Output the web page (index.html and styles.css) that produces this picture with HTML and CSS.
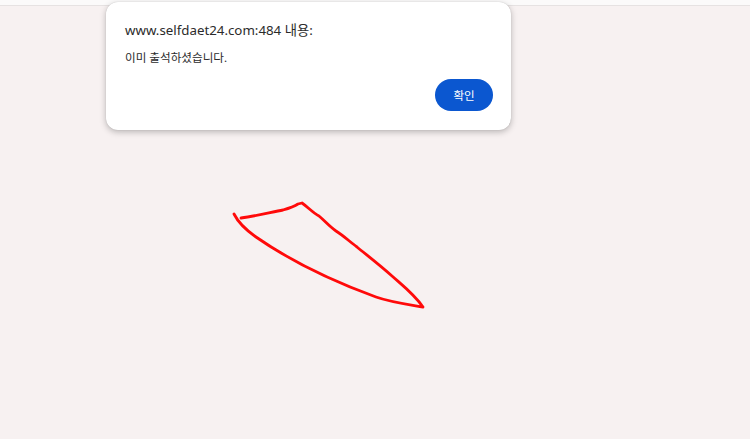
FILE: index.html
```html
<!DOCTYPE html>
<html lang="ko">
    <head>
        <meta charset="utf-8" />
        <title>출석체크</title>
        <link rel="stylesheet" href="styles.css">
    </head>
    <body>
        <div class="topBar"></div>
        <div class="page">
            <svg class="scribble" width="750" height="439" viewBox="0 0 750 439">
                <path d="M241 218 C 256 216, 272 212, 283 210 C 290 208, 295 206, 298 204 L 302 203 C 309 208, 313 213, 319 216 C 325 221, 329 226, 336 231 C 344 236, 350 242, 357 247 C 368 256, 381 266, 392 276 C 402 285, 414 294, 423 307 C 405 304, 390 302, 376 297 C 332 281, 292 262, 256 237 C 246 230, 238 222, 234 214" fill="none" stroke="#ff0a0a" stroke-width="2.8" stroke-linecap="round" stroke-linejoin="round"/>
            </svg>
        </div>
        <div class="dialog">
            <div class="dialogTitle">www.selfdaet24.com:484 내용:</div>
            <div class="dialogMsg">이미 출석하셨습니다.</div>
            <div class="dialogButtons">
                <button class="okButton">확인</button>
            </div>
        </div>
    </body>
</html>
```

FILE: styles.css
```css
html, body {
    margin: 0;
    height: 100%;
    overflow: hidden;
    font-family: "Noto Sans", "Noto Sans CJK KR", sans-serif;
    background-color: #f7f1f1;
}

.topBar {
    height: 5px;
    background-color: #fbfafa;
    border-bottom: 1px solid #e6e2e2;
}

.page {
    height: 433px;
}

.scribble {
    position: absolute;
    left: 0;
    top: 0;
}

.dialog {
    position: absolute;
    left: 106px;
    top: 2px;
    width: 405px;
    height: 128px;
    box-sizing: border-box;
    padding: 18px 18px 0 19px;
    background-color: #ffffff;
    border-radius: 12px;
    box-shadow: 0 2px 6px rgba(0, 0, 0, 0.25), 0 0 1px rgba(0, 0, 0, 0.2);
    display: flex;
    flex-direction: column;
}

.dialogTitle {
    font-size: 13.3px;
    color: #2b2b2b;
    line-height: 20px;
}

.dialogMsg {
    margin-top: 10px;
    font-size: 11.6px;
    color: #2b2b2b;
    line-height: 16px;
}

.dialogButtons {
    display: flex;
    justify-content: flex-end;
    margin-top: 13px;
}

.okButton {
    width: 58px;
    height: 32px;
    border: 0;
    border-radius: 16px;
    background-color: #0b57d0;
    color: #ffffff;
    font-family: "Noto Sans CJK KR", sans-serif;
    font-size: 11.5px;
    font-weight: 400;
}
```
